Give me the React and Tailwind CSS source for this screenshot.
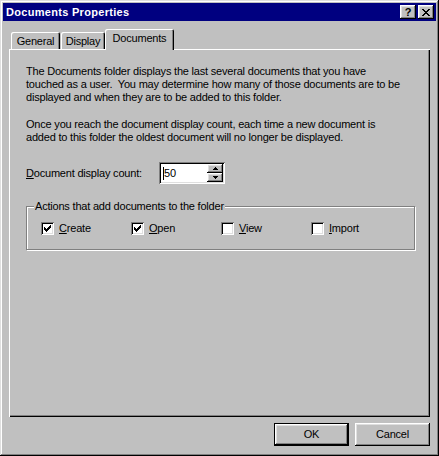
import React from "react";

const raised =
  "shadow-[inset_-1px_-1px_#000,inset_1px_1px_#fff,inset_-2px_-2px_#808080,inset_2px_2px_#dfdfdf]";
const sunken =
  "shadow-[inset_1px_1px_#808080,inset_-1px_-1px_#fff,inset_2px_2px_#000,inset_-2px_-2px_#dfdfdf]";

function Check() {
  const rows = [
    [6],
    [5, 6],
    [0, 4, 5, 6],
    [0, 1, 3, 4, 5],
    [0, 1, 2, 3, 4],
    [1, 2, 3],
    [2],
  ];
  return (
    <svg width="7" height="7" viewBox="0 0 7 7" shapeRendering="crispEdges">
      {rows.map((r, y) =>
        r.map((x) => <rect key={y + "-" + x} x={x} y={y} width="1" height="1" fill="#000" />)
      )}
    </svg>
  );
}

function CheckBox({ checked, label, u, rest }) {
  return (
    <div className="flex items-center w-[90px] shrink-0">
      <div className={`w-[13px] h-[13px] bg-white flex items-center justify-center ${sunken}`}>
        {checked && <Check />}
      </div>
      <span className="ml-[5px] text-black">
        <span className="underline underline-offset-[1px]">{u}</span>
        {rest}
      </span>
    </div>
  );
}

function Arrow({ up }) {
  return (
    <svg width="5" height="3" viewBox="0 0 5 3" shapeRendering="crispEdges">
      {up ? (
        <>
          <rect x="2" y="0" width="1" height="1" fill="#000" />
          <rect x="1" y="1" width="3" height="1" fill="#000" />
          <rect x="0" y="2" width="5" height="1" fill="#000" />
        </>
      ) : (
        <>
          <rect x="0" y="0" width="5" height="1" fill="#000" />
          <rect x="1" y="1" width="3" height="1" fill="#000" />
          <rect x="2" y="2" width="1" height="1" fill="#000" />
        </>
      )}
    </svg>
  );
}

export default function App() {
  return (
    <div
      className="w-[439px] h-[456px] bg-[#c0c0c0] p-[3px] flex flex-col text-[11px] leading-[13px] tracking-[-0.2px] text-black font-['Liberation_Sans',Arial,sans-serif] shadow-[inset_-1px_-1px_#000,inset_1px_1px_#dfdfdf,inset_-2px_-2px_#808080,inset_2px_2px_#fff]"
    >
      {/* Title bar */}
      <div className="h-[18px] bg-[#000080] flex items-center pl-[3px] pr-[2px] shrink-0">
        <span className="text-white font-bold text-[11px] tracking-[0.3px] flex-1">Documents Properties</span>
        <div className={`w-[16px] h-[14px] bg-[#c0c0c0] flex items-center justify-center ${raised}`}>
          <span className="font-bold text-[11px] leading-none mt-[1px]">?</span>
        </div>
        <div className={`w-[16px] h-[14px] bg-[#c0c0c0] flex items-center justify-center ml-[2px] ${raised}`}>
          <svg width="8" height="7" viewBox="0 0 8 7" shapeRendering="crispEdges">
            {[0, 1, 2, 3, 4, 5, 6].map((i) => (
              <g key={i}>
                <rect x={i} y={i} width="2" height="1" fill="#000" />
                <rect x={6 - i} y={i} width="2" height="1" fill="#000" />
              </g>
            ))}
          </svg>
        </div>
      </div>

      {/* Tabs */}
      <div className="mt-[8px] mx-[6px] h-[20px] flex items-end pl-[2px] relative z-10">
        <div className="h-[17px] w-[49px] bg-[#c0c0c0] rounded-tl-[2px] rounded-tr-[2px] shadow-[inset_1px_1px_#fff,inset_-1px_0_#000,inset_-2px_0_#808080] flex items-start justify-center pt-[3px]">
          General
        </div>
        <div className="h-[17px] w-[44px] bg-[#c0c0c0] rounded-tl-[2px] rounded-tr-[2px] shadow-[inset_1px_1px_#fff,inset_-1px_0_#000,inset_-2px_0_#808080] flex items-start justify-center pt-[3px] ml-[1px]">
          Display
        </div>
        <div className="h-[21px] w-[69px] -mb-[1px] bg-[#c0c0c0] rounded-tl-[2px] rounded-tr-[2px] shadow-[inset_1px_1px_#fff,inset_-1px_0_#000,inset_-2px_0_#808080] flex items-start justify-center pt-[3px]">
          Documents
        </div>
      </div>

      {/* Panel */}
      <div className="mx-[6px] h-[368px] bg-[#c0c0c0] shadow-[inset_1px_1px_#fff,inset_-1px_-1px_#000,inset_-2px_-2px_#808080] pt-[16px] pl-[17px] pr-[16px] flex flex-col">
        <p className="whitespace-pre">
          {"The Documents folder displays the last several documents that you have\ntouched as a user.  You may determine how many of those documents are to be\ndisplayed and when they are to be added to this folder."}
        </p>
        <p className="whitespace-pre mt-[14px]">
          {"Once you reach the document display count, each time a new document is\nadded to this folder the oldest document will no longer be displayed."}
        </p>

        <div className="mt-[18px] flex items-center">
          <span className="w-[133px]">
            <span className="underline underline-offset-[1px]">D</span>ocument display count:
          </span>
          <div className={`w-[66px] h-[22px] bg-white flex items-stretch p-[2px] ${sunken}`}>
            <div className="flex-1 flex items-center pl-[2px]">
              <span className="w-px h-[13px] bg-black"></span>
              <span>50</span>
            </div>
            <div className="w-[16px] flex flex-col">
              <div className={`h-[9px] bg-[#c0c0c0] flex items-center justify-center ${raised}`}>
                <Arrow up />
              </div>
              <div className={`h-[9px] bg-[#c0c0c0] flex items-center justify-center ${raised}`}>
                <Arrow />
              </div>
            </div>
          </div>
        </div>

        <div className="mt-[22px] mr-[-1px] relative h-[44px] border border-[#808080] shadow-[1px_1px_#fff,inset_1px_1px_#fff] flex items-center pl-[14px]">
          <span className="absolute left-[7px] top-[-7px] bg-[#c0c0c0] px-px">
            Actions that add documents to the folder
          </span>
          <div className="flex mt-[1px]">
            <CheckBox checked u="C" rest="reate" />
            <CheckBox checked u="O" rest="pen" />
            <CheckBox u="V" rest="iew" />
            <CheckBox u="I" rest="mport" />
          </div>
        </div>
      </div>

      {/* Buttons */}
      <div className="mt-[6px] mx-[6px] flex justify-end gap-[6px]">
        <div className="w-[75px] h-[23px] border border-black bg-[#c0c0c0]">
          <div className={`w-full h-full flex items-center justify-center ${raised}`}>OK</div>
        </div>
        <div className={`w-[75px] h-[23px] bg-[#c0c0c0] flex items-center justify-center ${raised}`}>
          Cancel
        </div>
      </div>
    </div>
  );
}
